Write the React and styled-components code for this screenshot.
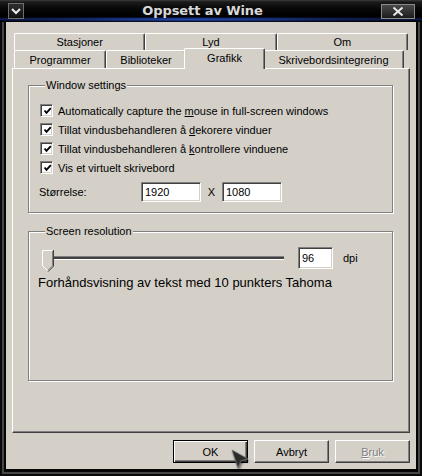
import React from 'react'
import styled, { createGlobalStyle } from 'styled-components'

const GlobalStyle = createGlobalStyle`
  html, body {
    margin: 0;
    padding: 0;
    background: #000;
  }
  body {
    font-family: "Liberation Sans", Arial, sans-serif;
    font-size: 11px;
    color: #000;
  }
`

const FACE = '#d4d0c8'

const checkRows = [
  { before: 'Automatically capture the ', key: 'm', after: 'ouse in full-screen windows' },
  { before: 'Tillat vindusbehandleren å ', key: 'd', after: 'ekorere vinduer' },
  { before: 'Tillat vindusbehandleren å ', key: 'k', after: 'ontrollere vinduene' },
  { before: 'Vis et virtuelt skrivebord', key: '', after: '' },
]

const App = () => {
  return (
    <>
      <GlobalStyle />
      <Window>
        <TitleBar>
          <MenuButton>
            <svg width="10" height="8" viewBox="0 0 10 8">
              <path d="M1 2 L5 6 L9 2" fill="none" stroke="#f0f0f0" strokeWidth="2" />
            </svg>
          </MenuButton>
          <Title>Oppsett av Wine</Title>
          <CloseButton>
            <svg width="12" height="9" viewBox="0 0 12 9">
              <path d="M1.5 0.5 L10.5 8.5 M10.5 0.5 L1.5 8.5" stroke="#e8e8e8" strokeWidth="2" />
            </svg>
          </CloseButton>
        </TitleBar>

        <Body>
          <TabRow $h={17}>
            <Tab>Stasjoner</Tab>
            <Tab>Lyd</Tab>
            <Tab>Om</Tab>
          </TabRow>
          <TabRow $h={18}>
            <Tab $w={92}>Programmer</Tab>
            <Tab $w={80}>Biblioteker</Tab>
            <Tab $w={81} $active>Grafikk</Tab>
            <Tab $w={141}>Skrivebordsintegrering</Tab>
          </TabRow>

          <Panel>
            <GroupBox>
              <Legend>Window settings</Legend>
              {checkRows.map((r, i) => (
                <CheckRow key={i}>
                  <CheckBox>
                    <svg width="9" height="9" viewBox="0 0 9 9">
                      <path d="M1.5 3.5 L3.5 5.8 L7.8 1.2" fill="none" stroke="#000" strokeWidth="1.9" />
                    </svg>
                  </CheckBox>
                  <span>
                    {r.before}
                    {r.key && <u>{r.key}</u>}
                    {r.after}
                  </span>
                </CheckRow>
              ))}
              <SizeRow>
                <SizeLabel>Størrelse:</SizeLabel>
                <TextField $w={60} defaultValue="1920" readOnly />
                <Times>X</Times>
                <TextField $w={60} defaultValue="1080" readOnly />
              </SizeRow>
            </GroupBox>

            <GroupBox $gap={12} $height={156}>
              <Legend>Screen resolution</Legend>
              <SliderRow>
                <Slider>
                  <Thumb width="12" height="22" viewBox="0 0 12 22">
                    <polygon points="0.5,0.5 11.5,0.5 11.5,16 6,21.5 0.5,16" fill={FACE} />
                    <polyline points="6,21 0.5,15.8 0.5,0.5 10.5,0.5" fill="none" stroke="#fff" />
                    <polyline points="11.5,0 11.5,16.2 6,21.7" fill="none" stroke="#404040" />
                    <polyline points="10.5,1 10.5,15.8 6,20.3" fill="none" stroke="#808080" />
                  </Thumb>
                  <Track />
                </Slider>
                <TextField $w={35} $h={22} defaultValue="96" readOnly />
                <Unit>dpi</Unit>
              </SliderRow>
              <Preview>Forhåndsvisning av tekst med 10 punkters Tahoma</Preview>
            </GroupBox>
          </Panel>

          <ButtonRow>
            <Button $default>OK</Button>
            <Button>Avbryt</Button>
            <Button disabled><u>B</u>ruk</Button>
          </ButtonRow>
        </Body>

        <Cursor width="20" height="22" viewBox="0 0 20 22">
          <polygon points="1,1 17,10 10,11.5 7,19" fill="#2b2b2b" stroke="#6e6e6e" strokeWidth="0.8" />
        </Cursor>
      </Window>
    </>
  )
}

const Window = styled.div`
  position: relative;
  width: 422px;
  height: 476px;
  box-sizing: border-box;
  display: flex;
  flex-direction: column;
  background: #050505;
  box-shadow: inset 0 0 0 2px #0a0a0a, inset 0 0 0 4px #474747;
  overflow: hidden;
`

const TitleBar = styled.div`
  height: 22px;
  flex: 0 0 22px;
  display: flex;
  align-items: flex-start;
  padding: 0 7px 0 8px;
  box-sizing: border-box;
  background:
    radial-gradient(ellipse 60% 3px at 45% 19.5px, rgba(40, 80, 190, 0.9), rgba(20, 40, 110, 0.5) 60%, transparent),
    linear-gradient(#3c3c3c 0, #1a1a1a 2px, #070707 9px, #000 17px, #0d1a40 19px, #061030 20px, #000 21px);
`

const MenuButton = styled.div`
  width: 16px;
  height: 16px;
  margin-top: 3px;
  box-sizing: border-box;
  border: 1px solid #6d6d6d;
  background: linear-gradient(#2e2e2e, #111);
  display: flex;
  align-items: center;
  justify-content: center;
`

const Title = styled.div`
  flex: 1;
  text-align: center;
  font-family: "DejaVu Sans", sans-serif;
  font-weight: bold;
  font-size: 13px;
  line-height: 22px;
  color: #d9d9d9;
  letter-spacing: -0.1px;
`

const CloseButton = styled.div`
  width: 34px;
  height: 15px;
  margin-top: 4px;
  box-sizing: border-box;
  border: 1px solid #8a8a8a;
  background: linear-gradient(#4a4a4a, #1c1c1c);
  display: flex;
  align-items: center;
  justify-content: center;
`

const Body = styled.div`
  flex: 1;
  margin: 0 6px 7px;
  padding: 11px 6px 6px;
  background: ${FACE};
  display: flex;
  flex-direction: column;
`

const TabRow = styled.div`
  display: flex;
  height: ${p => p.$h}px;
  margin: 0 2px;
`

const Tab = styled.div`
  flex: ${p => (p.$w ? `0 0 ${p.$w}px` : '1 1 0')};
  box-sizing: border-box;
  display: flex;
  align-items: center;
  justify-content: center;
  background: ${FACE};
  border: 1px solid;
  border-color: #fff #404040 transparent #fff;
  border-bottom: none;
  border-radius: 2px 2px 0 0;
  box-shadow: inset -1px 0 0 #808080;
  white-space: nowrap;
  ${p => p.$active && `
    position: relative;
    z-index: 1;
    margin: -2px -2px -1px;
    padding-bottom: 2px;
  `}
`

const Panel = styled.div`
  height: 365px;
  flex: 0 0 365px;
  box-sizing: border-box;
  border: 1px solid;
  border-color: #fff #404040 #404040 #fff;
  box-shadow: inset -1px -1px 0 #808080;
  padding: 10px 16px 0 15px;
`

const GroupBox = styled.fieldset`
  margin: ${p => p.$gap || 0}px 0 0;
  padding: 9px 11px 10px;
  border: 1px solid #808080;
  box-shadow: inset 1px 1px 0 #fff, 1px 1px 0 #fff;
  min-width: 0;
  ${p => p.$height && `height: ${p.$height}px; box-sizing: border-box;`}
`

const Legend = styled.legend`
  padding: 0 1px;
  margin-left: 5px;
  line-height: 13px;
  background: ${FACE};
`

const CheckRow = styled.div`
  display: flex;
  align-items: center;
  height: 19px;
  gap: 5px;
`

const CheckBox = styled.span`
  width: 13px;
  height: 13px;
  box-sizing: border-box;
  flex: 0 0 13px;
  background: #fff;
  border: 1px solid;
  border-color: #808080 #fff #fff #808080;
  box-shadow: inset 1px 1px 0 #404040, inset -1px -1px 0 ${FACE};
  display: flex;
  align-items: center;
  justify-content: center;
  padding-left: 1px;
  padding-top: 1px;
`

const SizeRow = styled.div`
  display: flex;
  align-items: center;
  margin-top: 5px;
  height: 20px;
`

const SizeLabel = styled.span`
  width: 102px;
  margin-left: -1px;
  flex: 0 0 auto;
`

const TextField = styled.input`
  width: ${p => p.$w}px;
  height: ${p => p.$h || 20}px;
  box-sizing: border-box;
  margin: 0;
  padding: 0 3px;
  font: inherit;
  color: #000;
  background: #fff;
  border: 1px solid;
  border-color: #808080 #fff #fff #808080;
  box-shadow: inset 1px 1px 0 #404040, inset -1px -1px 0 ${FACE};
  outline: none;
`

const Times = styled.span`
  width: 21px;
  text-align: center;
`

const SliderRow = styled.div`
  display: flex;
  align-items: flex-start;
  height: 22px;
`

const Slider = styled.div`
  width: 244px;
  display: flex;
  align-items: flex-start;
  margin-right: 14px;
`

const Thumb = styled.svg`
  display: block;
  margin: 3px 0 0 2px;
  flex: 0 0 auto;
`

const Track = styled.div`
  flex: 1;
  margin-top: 9px;
  height: 2px;
  background: #404040;
  border-top: 1px solid #808080;
  border-bottom: 1px solid #fff;
`

const Unit = styled.span`
  margin-left: 10px;
  line-height: 22px;
`

const Preview = styled.div`
  margin-top: 6px;
  margin-left: -2px;
  font-size: 13px;
  line-height: 16px;
`

const ButtonRow = styled.div`
  display: flex;
  justify-content: flex-end;
  gap: 6px;
  margin-top: 7px;
`

const Button = styled.button`
  width: 75px;
  height: 23px;
  box-sizing: border-box;
  margin: 0;
  padding: 0;
  font: inherit;
  color: #000;
  background: ${FACE};
  border: 1px solid;
  border-color: #fff #404040 #404040 #fff;
  box-shadow: inset -1px -1px 0 #808080;
  ${p => p.$default && `
    border-color: #000;
    box-shadow: inset 1px 1px 0 #fff, inset -1px -1px 0 #404040, inset -2px -2px 0 #808080;
  `}
  &:disabled {
    color: #808080;
    text-shadow: 1px 1px 0 #fff;
  }
`

const Cursor = styled.svg`
  position: absolute;
  left: 231px;
  top: 449px;
  filter: drop-shadow(1px 2px 1px rgba(0, 0, 0, 0.5));
`

export default App
